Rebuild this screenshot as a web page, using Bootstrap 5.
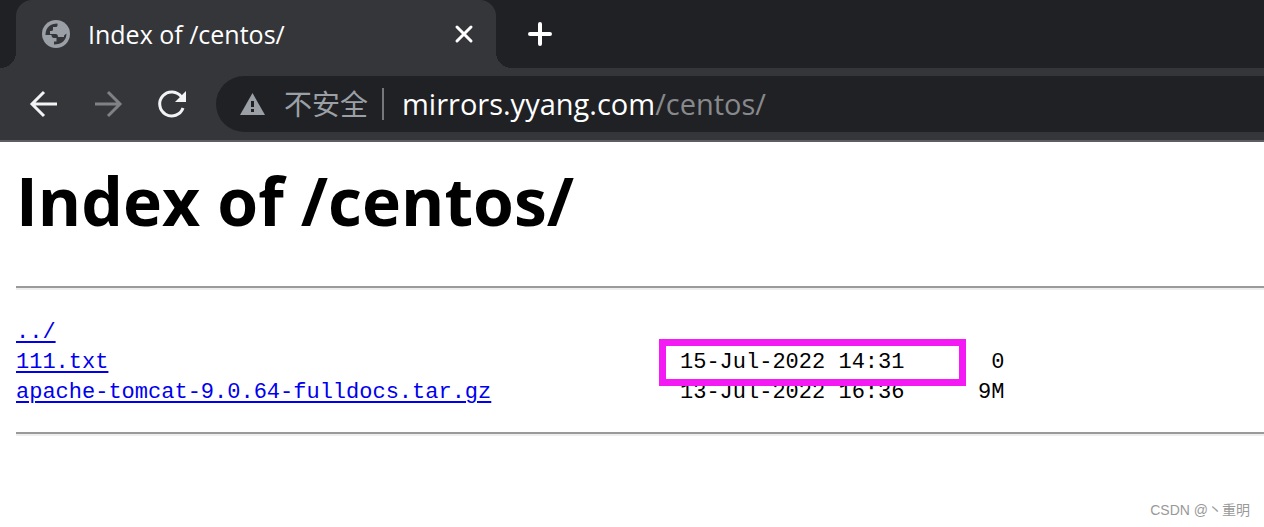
<!DOCTYPE html>
<html lang="zh-CN">
<head>
<meta charset="utf-8">
<meta name="viewport" content="width=device-width, initial-scale=1">
<title>Index of /centos/</title>
<link href="https://cdn.jsdelivr.net/npm/bootstrap@5.3.0/dist/css/bootstrap.min.css" rel="stylesheet">
<style>
  :root { --frame: #202124; --bar: #35363a; --soft: #9aa0a6; }
  body { font-family: "Open Sans", "Noto Sans CJK SC", sans-serif; color: #000; overflow-x: hidden; }
  svg { display: block; flex: none; }
  .tab-strip { background: var(--frame); height: 68px; }
  .tab-corner { width: 16px; height: 16px; background: radial-gradient(circle at 0 0, transparent 16px, var(--bar) 16px); }
  .tab-corner.end { background: radial-gradient(circle at 100% 0, transparent 16px, var(--bar) 16px); }
  .tab-active { background: var(--bar); border-radius: 16px 16px 0 0; width: 480px; padding: 0 22px 0 26px; color: #fff; font-size: 25px; }
  .tab-title { margin-left: 18px; padding-top: 2px; }
  .tool { border: 0; background: none; padding: 0; }
  .toolbar-row { background: var(--bar); border-bottom: 2px solid #5f5d63; padding: 8px 0 8px 28px; }
  .nav-tools { gap: 32px; }
  .omnibox { background: var(--frame); height: 56px; border-radius: 28px 0 0 28px; padding-left: 24px; font-size: 28px; margin-left: 28px; }
  .insecure { color: var(--soft); margin-left: 19px; }
  .divider { width: 2px; height: 32px; background: #75777b; margin: 0 18px 0 14px; }
  .address { color: #fff; font-size: 29px; }
  .address span { color: #87898c; }
  .listing { padding: 20px 0 0 16px; }
  .listing h1 { font-size: 66px; font-weight: 700; line-height: 76px; margin: 0 0 48px; }
  .listing hr { margin: 0; border: 0; opacity: 1; height: 4px; background: linear-gradient(#9a9a9a 50%, #eee 50%); }
  .files { font: 22px/30px "Liberation Mono", monospace; margin: 28px 0 24px; }
  .files td { padding: 0; white-space: pre; }
  .files a { color: #00e; text-decoration-thickness: 2px; text-underline-offset: 3px; }
  .col-name { width: 664px; }
  .col-date { width: 224px; }
  .col-size { width: 100px; }
  .stamp { position: relative; }
  .marker { position: absolute; inset: -11px -62px -11px -21px; border: 7px solid #f41af4; }
  .credit { color: #999; font: 14px/20px "Liberation Sans", "Noto Sans CJK SC", sans-serif; padding: 64px 14px 0 0; }
</style>
</head>
<body>
<header>
  <div class="tab-strip d-flex align-items-end">
    <div class="tab-corner"></div>
    <div class="tab-active d-flex align-items-center h-100">
      <svg width="28" height="28" viewBox="0 0 28 28" aria-hidden="true"><circle cx="14" cy="14" r="14" fill="#9aa0a6"/><path d="M3.500 14C4 7.500 8.500 3.500 15.500 3.500V5.500Q15.500 7 13.500 7H11V9.500Q11 11 9 11H8V14H13.500Q16 14 16 17H22V15.500L24.500 13.500C24.500 20 20 24.500 12 24.500V21.500H14.500V18H12Q9.500 18 9.500 15H3.500Z" fill="#35363a"/></svg>
      <span class="tab-title flex-grow-1">Index of /centos/</span>
      <button class="tool" aria-label="Close tab"><svg width="20" height="20" viewBox="0 0 20 20"><path d="M3 3 17 17M17 3 3 17" stroke="#fff" stroke-width="3" stroke-linecap="round"/></svg></button>
    </div>
    <div class="tab-corner end"></div>
    <button class="tool align-self-center ms-3" aria-label="New tab"><svg width="24" height="24" viewBox="0 0 24 24"><path d="M12 2V22M2 12H22" stroke="#fff" stroke-width="4" stroke-linecap="round"/></svg></button>
  </div>
  <nav class="toolbar-row d-flex align-items-center" aria-label="Browser">
    <div class="nav-tools d-flex">
      <button class="tool" aria-label="Back"><svg width="32" height="32" viewBox="0 0 32 32" fill="none" stroke="#f1f3f4" stroke-width="3"><path d="M4 16H29M16 4 4 16 16 28"/></svg></button>
      <button class="tool" aria-label="Forward" disabled><svg width="32" height="32" viewBox="0 0 32 32" fill="none" stroke="#808185" stroke-width="3"><path d="M3 16H28M16 4 28 16 16 28"/></svg></button>
      <button class="tool" aria-label="Reload"><svg width="32" height="32" viewBox="0 0 32 32"><path d="M25.500 9A12 12 0 1 0 27 20" fill="none" stroke="#f1f3f4" stroke-width="3"/><path d="M30 3V14H19Z" fill="#f1f3f4"/></svg></button>
    </div>
    <div class="omnibox d-flex align-items-center flex-grow-1">
      <svg width="25" height="22" viewBox="0 0 25 22" aria-hidden="true"><path d="M12.500 0 25 22H0Z" fill="#9aa0a6"/><path d="M11 8H14V14H11ZM11 16H14V19H11Z" fill="#202124"/></svg>
      <span class="insecure">不安全</span><span class="divider"></span>
      <span class="address">mirrors.yyang.com<span>/centos/</span></span>
    </div>
  </nav>
</header>
<main class="listing">
  <h1>Index of /centos/</h1>
  <hr>
  <table class="files">
    <tbody>
      <tr><td class="col-name"><a href="../">../</a></td><td class="col-date"></td><td class="col-size"></td></tr>
      <tr><td><a href="111.txt">111.txt</a></td><td><span class="stamp">15-Jul-2022 14:31<span class="marker"></span></span></td><td class="text-end">0</td></tr>
      <tr><td><a href="apache-tomcat-9.0.64-fulldocs.tar.gz">apache-tomcat-9.0.64-fulldocs.tar.gz</a></td><td>13-Jul-2022 16:36</td><td class="text-end">9M</td></tr>
    </tbody>
  </table>
  <hr>
</main>
<footer class="credit text-end">CSDN @丶重明</footer>
<script src="https://cdn.jsdelivr.net/npm/bootstrap@5.3.0/dist/js/bootstrap.bundle.min.js"></script>
</body>
</html>
